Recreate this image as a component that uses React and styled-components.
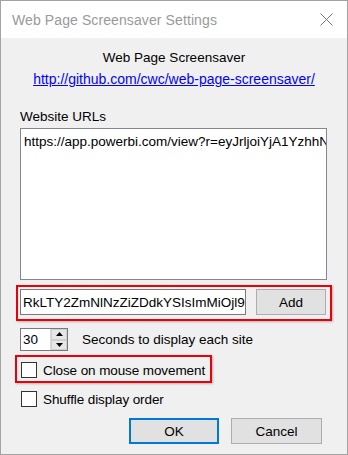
import React from "react";
import styled, { createGlobalStyle } from "styled-components";

const Global = createGlobalStyle`
  html, body { margin: 0; padding: 0; background: #ffffff; }
  * { box-sizing: border-box; }
`;

const Window = styled.div`
  width: 348px;
  height: 455px;
  border: 1px solid #a3a3a3;
  display: flex;
  flex-direction: column;
  font-family: "Liberation Sans", Arial, sans-serif;
  font-size: 13.5px;
  color: #000;
  overflow: hidden;
`;

const TitleBar = styled.div`
  height: 37px;
  flex: none;
  background: #ffffff;
  display: flex;
  align-items: center;
  justify-content: space-between;
  padding: 0 14px 0 11px;
`;

const Title = styled.div`
  font-size: 14px;
  color: #999999;
  letter-spacing: 0.1px;
`;

const Body = styled.div`
  flex: 1;
  background: #f0f0f0;
  display: flex;
  flex-direction: column;
  padding: 0 24px 0 19px;
`;

const Header = styled.div`
  margin-top: 12px;
  line-height: 16px;
  text-align: center;
  margin-right: -5px;
`;

const Link = styled.a`
  display: block;
  margin-top: 5px;
  line-height: 16px;
  font-size: 14px;
  text-align: center;
  margin-right: -5px;
  color: #0000ff;
  text-decoration: underline;
`;

const Label = styled.div`
  margin-top: 22px;
  line-height: 16px;
`;

const UrlList = styled.div`
  margin-top: 3px;
  width: 307px;
  height: 152px;
  background: #fff;
  border: 1px solid #828790;
  padding: 5px 0 0 3px;
  white-space: nowrap;
  overflow: hidden;
  line-height: 16px;
`;

const Highlight = styled.div`
  border: 2px solid #e8000b;
  box-shadow: 1px 1px 2px rgba(0, 0, 0, 0.25);
  margin-left: ${(p) => p.$left}px;
  padding: ${(p) => p.$pad};
  display: flex;
  align-items: center;
  align-self: flex-start;
  width: ${(p) => p.$width}px;
  white-space: nowrap;
`;

const AddRow = styled(Highlight)`
  margin-top: 5px;
  gap: 10px;
`;

const TextInput = styled.div`
  width: 227px;
  height: 26px;
  background: #fff;
  border: 1px solid #7a7a7a;
  padding-left: 2px;
  display: flex;
  align-items: center;
  white-space: nowrap;
  overflow: hidden;
`;

const Button = styled.div`
  width: ${(p) => p.$width}px;
  height: 26px;
  background: #e1e1e1;
  border: ${(p) => (p.$default ? "2px solid #0078d7" : "1px solid #adadad")};
  display: flex;
  align-items: center;
  justify-content: center;
`;

const SpinRow = styled.div`
  margin-top: 7px;
  display: flex;
  align-items: center;
  height: 23px;
`;

const Spinner = styled.div`
  width: 48px;
  height: 23px;
  background: #fff;
  border: 1px solid #7a7a7a;
  display: flex;
  align-items: stretch;
`;

const SpinValue = styled.div`
  flex: 1;
  padding-left: 2px;
  display: flex;
  align-items: center;
`;

const SpinButtons = styled.div`
  width: 17px;
  display: flex;
  flex-direction: column;
  background: #f0f0f0;
  border-left: 1px solid #d9d9d9;
`;

const SpinButton = styled.div`
  flex: 1;
  display: flex;
  align-items: center;
  justify-content: center;
  background: #e6e6e6;
  border: 1px solid #cfcfcf;
`;

const SpinLabel = styled.div`
  margin-left: 14px;
`;

const CheckHighlight = styled(Highlight)`
  margin-top: 4px;
  gap: 6px;
`;

const CheckRow = styled.div`
  margin-top: ${(p) => p.$top || 0}px;
  margin-left: ${(p) => p.$left || 0}px;
  display: flex;
  align-items: center;
  gap: 6px;
  height: 16px;
  white-space: nowrap;
`;

const Box = styled.div`
  width: 16px;
  height: 16px;
  background: #fff;
  border: 1px solid #333333;
  flex: none;
`;

const CheckText = styled.span`
  letter-spacing: -0.1px;
`;

const Footer = styled.div`
  margin-top: 11px;
  display: flex;
  justify-content: flex-end;
  gap: 12px;
  margin-right: 1px;
`;

const Triangle = ({ up }) => (
  <svg width="7" height="4" viewBox="0 0 7 4">
    <polygon points={up ? "0,4 7,4 3.5,0" : "0,0 7,0 3.5,4"} fill="#000" />
  </svg>
);

export default function App() {
  return (
    <>
      <Global />
      <Window>
        <TitleBar>
          <Title>Web Page Screensaver Settings</Title>
          <svg width="13" height="13" viewBox="0 0 13 13">
            <path d="M0.5 0.5 L12.5 12.5 M12.5 0.5 L0.5 12.5" stroke="#777" strokeWidth="1" />
          </svg>
        </TitleBar>
        <Body>
          <Header>Web Page Screensaver</Header>
          <Link href="#">http://github.com/cwc/web-page-screensaver/</Link>
          <Label>Website URLs</Label>
          <UrlList>https://app.powerbi.com/view?r=eyJrljoiYjA1YzhhN</UrlList>
          <AddRow $left={-4} $width={316} $pad="2px 4px 4px 2px">
            <TextInput>RkLTY2ZmNlNzZiZDdkYSIsImMiOjl9</TextInput>
            <Button $width={70}>Add</Button>
          </AddRow>
          <SpinRow>
            <Spinner>
              <SpinValue>30</SpinValue>
              <SpinButtons>
                <SpinButton><Triangle up /></SpinButton>
                <SpinButton><Triangle /></SpinButton>
              </SpinButtons>
            </Spinner>
            <SpinLabel>Seconds to display each site</SpinLabel>
          </SpinRow>
          <CheckHighlight $left={-5} $width={197} $pad="5px 2px 3px 4px">
            <Box />
            <CheckText>Close on mouse movement</CheckText>
          </CheckHighlight>
          <CheckRow $top={8} $left={1}>
            <Box />
            <CheckText>Shuffle display order</CheckText>
          </CheckRow>
          <Footer>
            <Button $width={90} $default>OK</Button>
            <Button $width={91}>Cancel</Button>
          </Footer>
        </Body>
      </Window>
    </>
  );
}
